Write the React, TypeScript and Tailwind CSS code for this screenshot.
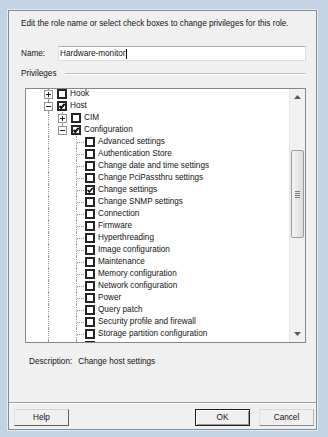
import React from "react";

type Row = {
  label: string;
  level: 1 | 2 | 3;
  exp?: "+" | "-";
  checked?: boolean;
  heavy?: boolean;
  lineBelow?: boolean;
};

const rows: Row[] = [
  { label: "Hook", level: 1, exp: "+", lineBelow: true },
  { label: "Host", level: 1, exp: "-", checked: true, heavy: true, lineBelow: true },
  { label: "CIM", level: 2, exp: "+", lineBelow: true },
  { label: "Configuration", level: 2, exp: "-", checked: true, heavy: true },
  { label: "Advanced settings", level: 3 },
  { label: "Authentication Store", level: 3 },
  { label: "Change date and time settings", level: 3 },
  { label: "Change PciPassthru settings", level: 3 },
  { label: "Change settings", level: 3, checked: true },
  { label: "Change SNMP settings", level: 3 },
  { label: "Connection", level: 3 },
  { label: "Firmware", level: 3 },
  { label: "Hyperthreading", level: 3 },
  { label: "Image configuration", level: 3 },
  { label: "Maintenance", level: 3 },
  { label: "Memory configuration", level: 3 },
  { label: "Network configuration", level: 3 },
  { label: "Power", level: 3 },
  { label: "Query patch", level: 3 },
  { label: "Security profile and firewall", level: 3 },
  { label: "Storage partition configuration", level: 3 },
  { label: "System Management", level: 3 },
];

function Expander({ sign }: { sign: "+" | "-" }) {
  return (
    <svg width="9" height="9" className="block shrink-0">
      <rect x="0.5" y="0.5" width="8" height="8" fill="#fff" stroke="#939393" />
      <path d="M2 4.5H7" stroke="#222" />
      {sign === "+" && <path d="M4.5 2V7" stroke="#222" />}
    </svg>
  );
}

function CheckBox({ checked, heavy }: { checked?: boolean; heavy?: boolean }) {
  return (
    <svg width="10" height="10" className="block shrink-0">
      <rect x="1" y="1" width="8" height="8" fill="#fff" stroke="#262626" strokeWidth="2" />
      {checked && (
        <path
          d="M2.6 5 L4.3 6.9 L7.6 2.9"
          fill="none"
          stroke="#111"
          strokeWidth={heavy ? 2.1 : 1.6}
        />
      )}
    </svg>
  );
}

function LineCell() {
  return (
    <div className="w-[14px] h-full pl-[6px] shrink-0">
      <div className="w-0 h-full border-l border-dotted border-[#9a9a9a]" />
    </div>
  );
}

function ExpanderCell({ sign, below }: { sign: "+" | "-"; below?: boolean }) {
  return (
    <div className="w-[14px] h-full pl-[2px] flex flex-col shrink-0">
      <div className="ml-[4px] w-0 flex-1 border-l border-dotted border-[#9a9a9a]" />
      <Expander sign={sign} />
      <div
        className={`ml-[4px] w-0 flex-1 ${below ? "border-l border-dotted border-[#9a9a9a]" : ""}`}
      />
    </div>
  );
}

function LeafCell() {
  return (
    <div className="w-[14px] h-full pl-[6px] flex shrink-0">
      <div className="w-0 h-full border-l border-dotted border-[#9a9a9a]" />
      <div className="flex-1 self-start mt-[6px] h-0 border-t border-dotted border-[#9a9a9a]" />
    </div>
  );
}

function TreeRow({ row }: { row: Row }) {
  return (
    <div className="flex h-[12px] pl-[16px] items-stretch">
      {row.level === 1 && <ExpanderCell sign={row.exp!} below={row.lineBelow} />}
      {row.level === 2 && (
        <>
          <LineCell />
          <ExpanderCell sign={row.exp!} below={row.lineBelow} />
        </>
      )}
      {row.level === 3 && (
        <>
          <LineCell />
          <div className="w-[14px] shrink-0" />
          <LeafCell />
        </>
      )}
      <div className="flex items-center ml-[1px]">
        <CheckBox checked={row.checked} heavy={row.heavy} />
      </div>
      <span className="ml-[3px] leading-[12px] whitespace-nowrap text-[#141414]">{row.label}</span>
    </div>
  );
}

function ScrollBar() {
  return (
    <div className="w-[16px] flex flex-col bg-[#f1f1f1] border-l border-[#e6e6e6]">
      <div className="h-[16px] flex items-center justify-center">
        <svg width="7" height="4" className="block">
          <path d="M0 4 L3.5 0 L7 4Z" fill="#5a5a5a" />
        </svg>
      </div>
      <div className="flex-1 flex flex-col">
        <div className="mt-[45px] mx-[1px] h-[88px] rounded-[2px] border border-[#9c9c9c] bg-gradient-to-r from-[#f4f4f4] to-[#dcdcdc] flex flex-col items-center justify-center gap-[1px]">
          <div className="w-[5px] h-px bg-[#7a7a7a]" />
          <div className="w-[5px] h-px bg-[#7a7a7a]" />
          <div className="w-[5px] h-px bg-[#7a7a7a]" />
          <div className="w-[5px] h-px bg-[#7a7a7a]" />
        </div>
      </div>
      <div className="h-[16px] flex items-center justify-center">
        <svg width="7" height="4" className="block">
          <path d="M0 0 L3.5 4 L7 0Z" fill="#5a5a5a" />
        </svg>
      </div>
    </div>
  );
}

export default function App() {
  return (
    <div className="w-[328px] h-[437px] bg-[#c3d3e3] pl-[8px] pt-[10px] pr-[11px] pb-[7px] font-['Liberation_Sans',Arial,sans-serif] text-[8.2px] text-[#141414] overflow-hidden">
      <div className="h-full flex flex-col bg-[#f0f0f0] border border-[#7f8d9b] shadow-[0_0_0_1px_#e4ecf4]">
        <div className="flex-1 flex flex-col pl-[12px] pr-[10px] pt-[7px]">
          <p className="leading-[12px] whitespace-nowrap">
            Edit the role name or select check boxes to change privileges for this role.
          </p>

          <div className="mt-[16px] flex items-center h-[15px]">
            <span className="w-[37px] leading-[12px]">Name:</span>
            <div className="flex-1 h-[15px] bg-white border border-[#dbdfe6] border-t-[#abadb3] flex items-center pl-[1px]">
              <span className="leading-[12px]">Hardware-monitor</span>
              <span className="w-px h-[10px] bg-black" />
            </div>
          </div>

          <div className="mt-[7px] flex items-center h-[12px]">
            <span className="leading-[12px]">Privileges</span>
            <div className="flex-1 ml-[8px] h-[2px] border-t border-[#c2c2c2] bg-white" />
          </div>

          <div className="mt-[8px] ml-[4px] h-[255px] flex bg-white border border-[#828790]">
            <div className="flex-1 overflow-hidden">
              <div className="-mt-[1px]">
                {rows.map((r) => (
                  <TreeRow key={r.label} row={r} />
                ))}
              </div>
            </div>
            <ScrollBar />
          </div>

          <div className="mt-[13px] ml-[8px] flex leading-[12px] whitespace-nowrap">
            <span>Description:</span>
            <span className="ml-[6px]">Change host settings</span>
          </div>
        </div>

        <div className="h-[2px] border-t border-[#a0a0a0] bg-white" />
        <div className="h-[25px] pt-[5px] pl-[5px] pr-[2px] flex items-start">
          <button className="w-[55px] h-[17px] bg-[#f0f0f0] border border-t-[#d4d4d4] border-l-[#e2e2e2] border-r-[#5e5e5e] border-b-[#5e5e5e] leading-[12px]">
            Help
          </button>
          <div className="ml-auto flex gap-[9px]">
            <button className="w-[55px] h-[17px] bg-[#f0f0f0] border border-[#1e1e1e] shadow-[inset_1px_1px_0_#ffffff,inset_-1px_-1px_0_#9a9a9a] leading-[12px]">
              OK
            </button>
            <button className="w-[55px] h-[17px] bg-[#f0f0f0] border border-t-[#d8d8d8] border-l-[#e4e4e4] border-r-[#b4b4b4] border-b-[#8a8a8a] leading-[12px]">
              Cancel
            </button>
          </div>
        </div>
      </div>
    </div>
  );
}
